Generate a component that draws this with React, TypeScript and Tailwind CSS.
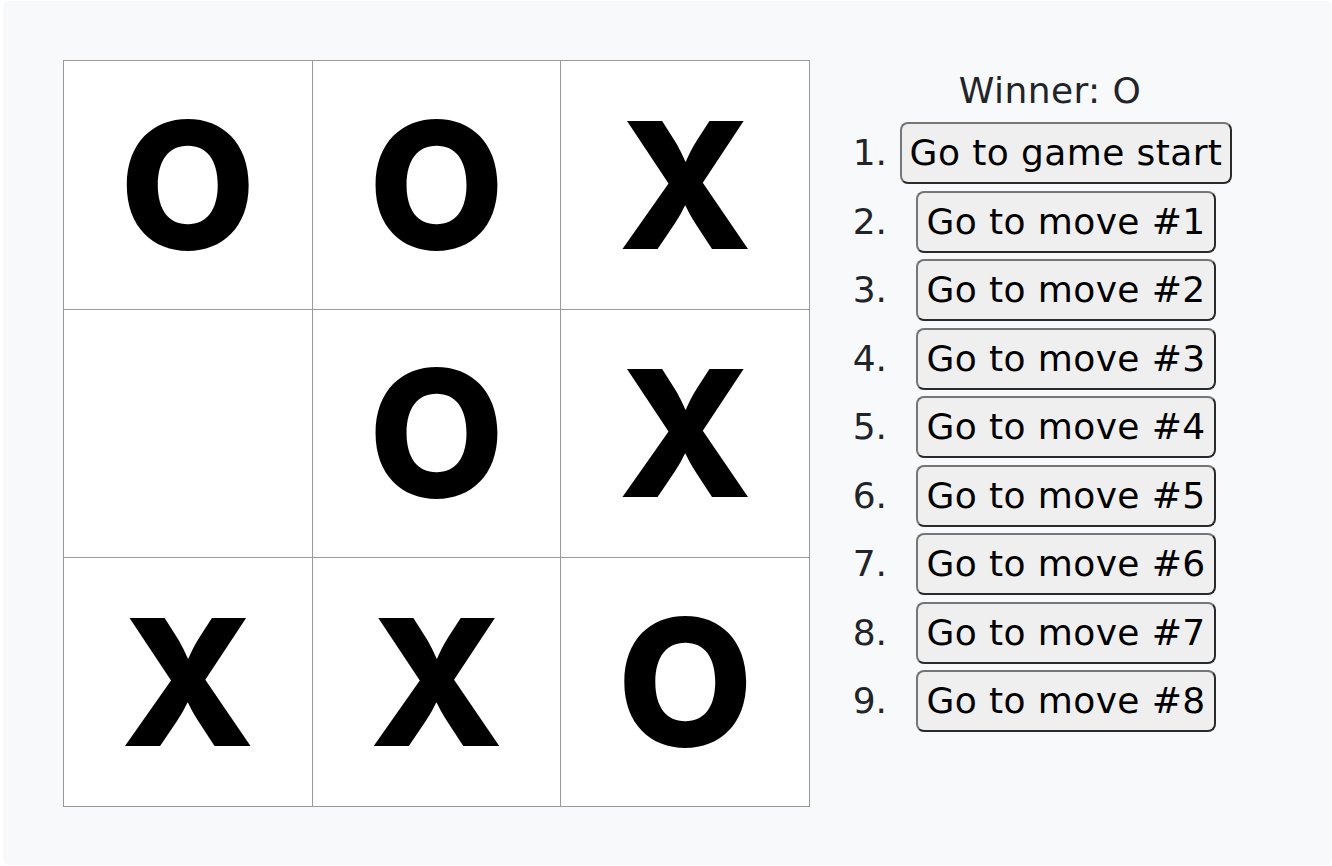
import React from 'react';

const squares = ['O', 'O', 'X', null, 'O', 'X', 'X', 'X', 'O'];
const moves = [
  'Go to game start',
  'Go to move #1',
  'Go to move #2',
  'Go to move #3',
  'Go to move #4',
  'Go to move #5',
  'Go to move #6',
  'Go to move #7',
  'Go to move #8',
];

function Square({ value }: { value: string | null }) {
  return (
    <div className="flex items-center justify-center bg-white border-r border-b border-[#999] text-[176px] font-extrabold leading-none text-black">
      {value}
    </div>
  );
}

export default function App() {
  return (
    <div className="w-[1332px] h-[866px] bg-white pl-[3px] pt-[1px] pb-[1px]" style={{ fontFamily: '"DejaVu Sans", sans-serif' }}>
      <div className="h-full rounded-md bg-[#f8f9fa] flex items-start pl-[60px] pt-[59px]">
        <div className="grid grid-cols-3 grid-rows-3 w-[747px] h-[747px] border-l border-t border-[#999]" style={{ fontFamily: 'Inter, sans-serif' }}>
          {squares.map((s, i) => (
            <Square key={i} value={s} />
          ))}
        </div>

        <div className="ml-[33px] w-[392px] text-[36px] text-[#212529] tracking-[0.4px]">
          <div className="text-center leading-[48px] mt-[7px] pl-[22px]">Winner: O</div>
          <ol className="mt-[7px] flex flex-col gap-[6.5px]">
            {moves.map((m, i) => (
              <li key={i} className="flex items-baseline">
                <span className="w-[44px] text-right whitespace-nowrap leading-none tracking-normal">{i + 1}.</span>
                <div className="ml-[10px] w-[338px] flex justify-center">
                  <button className="h-[62px] px-[8px] rounded-lg border-2 border-t-[#767676] border-l-[#767676] border-r-[#2a2a2a] border-b-[#2a2a2a] bg-[#efefef] text-black whitespace-nowrap leading-none">
                    {m}
                  </button>
                </div>
              </li>
            ))}
          </ol>
        </div>
      </div>
    </div>
  );
}
